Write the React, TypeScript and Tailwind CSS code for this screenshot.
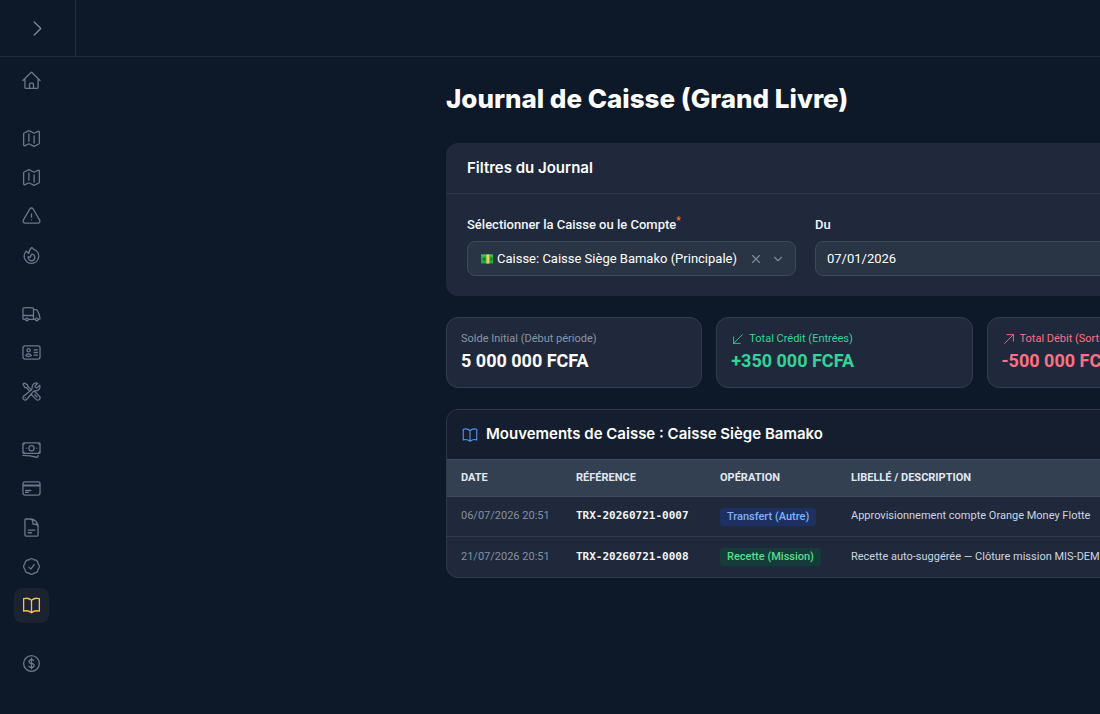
import type { ReactNode } from 'react';
import type { IconType } from 'react-icons';
import {
  HiOutlineHome,
  HiOutlineMap,
  HiOutlineExclamationTriangle,
  HiOutlineFire,
  HiOutlineTruck,
  HiOutlineIdentification,
  HiOutlineWrenchScrewdriver,
  HiOutlineBanknotes,
  HiOutlineCreditCard,
  HiOutlineDocumentText,
  HiOutlineCheckBadge,
  HiOutlineBookOpen,
  HiOutlineCurrencyDollar,
  HiOutlineChevronRight,
  HiOutlineArrowDownLeft,
  HiOutlineArrowUpRight,
} from 'react-icons/hi2';
import { ChevronDown, X } from 'lucide-react';

type NavItem = { label: string; icon: IconType; active?: boolean };

const navGroups: NavItem[][] = [
  [{ label: 'Tableau de bord', icon: HiOutlineHome }],
  [
    { label: 'Missions', icon: HiOutlineMap },
    { label: 'Trajets', icon: HiOutlineMap },
    { label: 'Incidents', icon: HiOutlineExclamationTriangle },
    { label: 'Carburant', icon: HiOutlineFire },
  ],
  [
    { label: 'Camions', icon: HiOutlineTruck },
    { label: 'Chauffeurs', icon: HiOutlineIdentification },
    { label: 'Maintenance', icon: HiOutlineWrenchScrewdriver },
  ],
  [
    { label: 'Caisses', icon: HiOutlineBanknotes },
    { label: 'Comptes', icon: HiOutlineCreditCard },
    { label: 'Factures', icon: HiOutlineDocumentText },
    { label: 'Validations', icon: HiOutlineCheckBadge },
    { label: 'Journal de Caisse', icon: HiOutlineBookOpen, active: true },
  ],
  [{ label: 'Devises', icon: HiOutlineCurrencyDollar }],
];

function Sidebar() {
  return (
    <nav aria-label="Navigation principale" className="flex w-[75px] shrink-0 flex-col gap-[23px] pt-[6px] pl-[14px]">
      {navGroups.map((group, i) => (
        <ul key={i} className="flex flex-col gap-1">
          {group.map(({ label, icon: Icon, active }) => (
            <li key={label}>
              <a
                href="#"
                aria-label={label}
                className={
                  active
                    ? 'flex size-[35px] items-center justify-center rounded-lg bg-[#1b2231] text-[#fbbf4c]'
                    : 'flex size-[35px] items-center justify-center rounded-lg text-[#6b778a]'
                }
              >
                <Icon className="size-[21px]" />
              </a>
            </li>
          ))}
        </ul>
      ))}
    </nav>
  );
}

function BanknoteGlyph() {
  return (
    <svg viewBox="0 0 14 12" className="h-3 w-[14px] shrink-0" aria-hidden="true">
      <rect x="1" y="1.5" width="12" height="9" rx="0.6" fill="#1faa3c" />
      <rect x="1" y="1.5" width="12" height="2" fill="#35c759" />
      <circle cx="4.2" cy="6.2" r="1.6" fill="#14802b" />
      <rect x="6.4" y="1.5" width="3" height="9" fill="#e8d35a" />
      <rect x="10.6" y="4.6" width="1.4" height="3" fill="#14802b" />
    </svg>
  );
}

function Filters() {
  return (
    <section className="rounded-xl bg-[#1f293b]">
      <h2 className="border-b border-[#2d384a] px-[21px] py-[15px] font-[Inter] text-[15px] leading-[20px] font-semibold text-white">
        Filtres du Journal
      </h2>
      <div className="grid grid-cols-3 gap-[19px] px-[21px] pt-[21px] pb-5">
        <div className="flex flex-col gap-[6px]">
          <label htmlFor="caisse" className="text-[13px] leading-[20px] font-medium text-[#f1f5f9]">
            Sélectionner la Caisse ou le Compte<sup className="text-[10px] text-[#f87146]">*</sup>
          </label>
          <div className="flex h-[35px] items-center rounded-lg border border-[#3d4858] bg-[#293444] pr-[10px] pl-3">
            <BanknoteGlyph />
            <select id="caisse" className="min-w-0 flex-1 appearance-none bg-transparent pl-[3px] text-[13px] text-white outline-none">
              <option>Caisse: Caisse Siège Bamako (Principale)</option>
            </select>
            <button type="button" aria-label="Effacer" className="text-[#7d8898]">
              <X className="size-[14px]" strokeWidth={2} />
            </button>
            <ChevronDown className="ml-2 size-[14px] text-[#7d8898]" aria-hidden="true" />
          </div>
        </div>
        <DateField id="du" label="Du" value="07/01/2026" />
        <DateField id="au" label="Au" value="07/31/2026" />
      </div>
    </section>
  );
}

function DateField({ id, label, value }: { id: string; label: string; value: string }) {
  return (
    <div className="flex flex-col gap-[6px]">
      <label htmlFor={id} className="text-[13px] leading-[20px] font-medium text-[#f1f5f9]">
        {label}
      </label>
      <input
        id={id}
        type="text"
        defaultValue={value}
        className="h-[35px] w-full rounded-lg border border-[#3d4858] bg-[#293444] px-[11px] text-[13px] text-white outline-none"
      />
    </div>
  );
}

function StatCard({ label, value, tone, icon }: { label: string; value: string; tone: string; icon?: ReactNode }) {
  return (
    <div className="rounded-xl border border-[#323d4f] bg-[#1f293b] px-[14px] pt-3 pb-[14px]">
      <p className={`flex items-center gap-1 text-[11px] leading-[18px] ${icon ? tone : 'text-[#8a95a6]'}`}>
        {icon}
        {label}
      </p>
      <p className={`text-lg leading-[25px] font-bold ${tone}`}>{value}</p>
    </div>
  );
}

const rows = [
  {
    date: '06/07/2026 20:51',
    ref: 'TRX-20260721-0007',
    op: 'Transfert (Autre)',
    badge: 'bg-[#1e3062] text-[#7db3f8]',
    text: 'Approvisionnement compte Orange Money Flotte',
  },
  {
    date: '21/07/2026 20:51',
    ref: 'TRX-20260721-0008',
    op: 'Recette (Mission)',
    badge: 'bg-[#153c3a] text-[#58dc8c]',
    text: 'Recette auto-suggérée — Clôture mission MIS-DEMO-001',
  },
];

function Movements() {
  return (
    <section className="overflow-hidden rounded-xl border border-[#2d384a] bg-[#1f293b]">
      <h2 className="flex h-[49px] items-center gap-[7px] bg-[#151e2f] px-[14px] font-[Inter] text-[15px] font-semibold text-white">
        <HiOutlineBookOpen className="size-[18px] text-[#5491e8]" />
        Mouvements de Caisse : Caisse Siège Bamako
      </h2>
      <table className="w-full text-left">
        <thead>
          <tr className="h-[37px] border-y border-[#3f4c5e] bg-[#324052] text-[11px] text-[#e2e8f0]">
            <th className="w-[115px] pl-[14px] font-bold">DATE</th>
            <th className="w-[144px] pl-[14px] font-bold">RÉFÉRENCE</th>
            <th className="w-[131px] pl-[14px] font-bold">OPÉRATION</th>
            <th className="pl-[14px] font-bold">LIBELLÉ / DESCRIPTION</th>
          </tr>
        </thead>
        <tbody>
          {rows.map((r) => (
            <tr key={r.ref} className="h-10 border-b border-[#323d4f] text-[11px] whitespace-nowrap last:border-b-0">
              <td className="pl-[14px] text-[#8490a1]">{r.date}</td>
              <td className="pl-[14px] font-['DejaVu_Sans_Mono',monospace] font-bold text-[#f1f5f9]">{r.ref}</td>
              <td className="pl-[14px]">
                <span className={`inline-block rounded px-[7px] leading-[18px] font-medium ${r.badge}`}>{r.op}</span>
              </td>
              <td className="pl-[14px] text-[#cbd5e1]">{r.text}</td>
            </tr>
          ))}
        </tbody>
      </table>
    </section>
  );
}

export default function App() {
  return (
    <div className="flex min-h-screen flex-col overflow-hidden bg-[#0d1829] font-[Roboto,sans-serif]">
      <header className="flex h-[57px] border-b border-[#1f2a3b]">
        <div className="flex w-[76px] items-center justify-center border-r border-[#1f2a3b]">
          <button type="button" aria-label="Ouvrir le menu" className="text-[#7d8898]">
            <HiOutlineChevronRight className="size-[21px]" />
          </button>
        </div>
      </header>
      <div className="flex flex-1">
        <Sidebar />
        <main className="min-w-0 flex-1 pt-6 pl-[371px]">
          <div className="flex w-full min-w-[1067px] flex-col gap-[21px]">
            <h1 className="mb-[6px] font-[Inter] text-[26px] leading-[35px] font-extrabold text-white">Journal de Caisse (Grand Livre)</h1>
            <Filters />
            <div className="grid grid-cols-4 gap-[14px]">
              <StatCard label="Solde Initial (Début période)" value="5 000 000 FCFA" tone="text-white" />
              <StatCard
                label="Total Crédit (Entrées)"
                value="+350 000 FCFA"
                tone="text-[#34d399]"
                icon={<HiOutlineArrowDownLeft className="size-[14px]" />}
              />
              <StatCard
                label="Total Débit (Sorties)"
                value="-500 000 FCFA"
                tone="text-[#fb7185]"
                icon={<HiOutlineArrowUpRight className="size-[14px]" />}
              />
              <StatCard label="Solde Final (Fin période)" value="4 850 000 FCFA" tone="text-white" />
            </div>
            <Movements />
          </div>
        </main>
      </div>
    </div>
  );
}
